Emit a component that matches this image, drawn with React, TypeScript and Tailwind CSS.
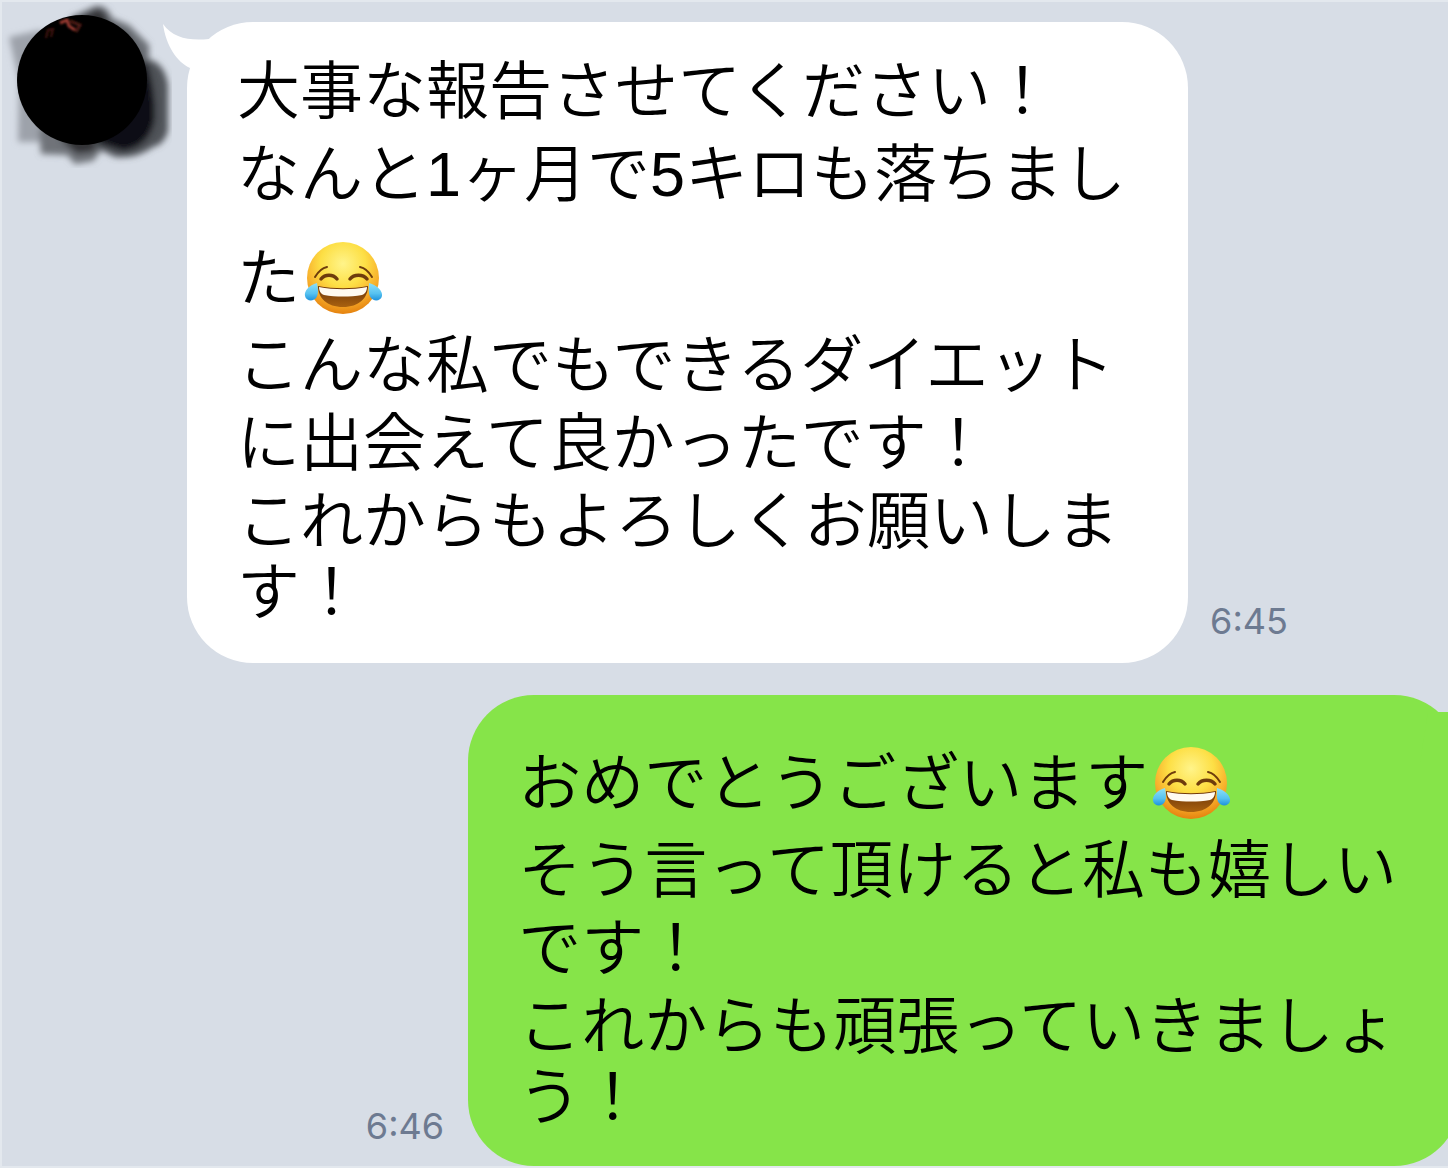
import React from 'react';
import clsx from 'clsx';

interface ChatLine {
  text: string;
  emoji?: boolean;
  className: string;
}

interface ChatMessage {
  id: string;
  sender: 'friend' | 'me';
  time: string;
  lines: ChatLine[];
}

const messages: ChatMessage[] = [
  {
    id: 'm1',
    sender: 'friend',
    time: '6:45',
    lines: [
      { text: '大事な報告させてください！', className: 'leading-[78px]' },
      { text: 'なんと1ヶ月で5キロも落ちまし', className: 'leading-[88px]' },
      { text: 'た', emoji: true, className: 'pt-3 leading-[96px]' },
      { text: 'こんな私でもできるダイエット', className: 'leading-[78px]' },
      { text: 'に出会えて良かったです！', className: 'leading-[78px]' },
      { text: 'これからもよろしくお願いしま', className: 'leading-[78px]' },
      { text: 'す！', className: 'leading-[64px]' },
    ],
  },
  {
    id: 'm2',
    sender: 'me',
    time: '6:46',
    lines: [
      { text: 'おめでとうございます', emoji: true, className: 'leading-[96px]' },
      { text: 'そう言って頂けると私も嬉しい', className: 'leading-[78px]' },
      { text: 'です！', className: 'leading-[78px]' },
      { text: 'これからも頑張っていきましょ', className: 'leading-[78px]' },
      { text: 'う！', className: 'leading-[64px]' },
    ],
  },
];

const JoyEmoji: React.FC<{ id: string }> = ({ id }) => (
  <svg viewBox="0 0 80 76" className="ml-1 w-20 h-[76px]" role="img" aria-label="😂">
    <defs>
      <radialGradient id={`${id}-face`} cx="0.5" cy="0.3" r="0.7">
        <stop offset="0" stopColor="#fff48a" />
        <stop offset="0.45" stopColor="#fddf45" />
        <stop offset="0.75" stopColor="#f8b02c" />
        <stop offset="1" stopColor="#e5820f" />
      </radialGradient>
      <linearGradient id={`${id}-mouth`} x1="0" y1="0" x2="0" y2="1">
        <stop offset="0" stopColor="#6b3408" />
        <stop offset="1" stopColor="#a9610f" />
      </linearGradient>
      <linearGradient id={`${id}-tear`} x1="0" y1="0" x2="0" y2="1">
        <stop offset="0" stopColor="#8fe0f8" />
        <stop offset="0.6" stopColor="#56c2f0" />
        <stop offset="1" stopColor="#1d92dc" />
      </linearGradient>
    </defs>
    <circle cx="39" cy="38" r="36" fill={`url(#${id}-face)`} />
    <g fill="none" stroke="#6e3c0c" strokeLinecap="round">
      <path d="M11 37 C14 32 18 28 23 27" strokeWidth="2" />
      <path d="M56 27 C61 28 65 32 68 37" strokeWidth="2" />
      <path d="M17 39 C21 34 29 34 33 39" strokeWidth="3.5" />
      <path d="M46 39 C50 34 59 34 63 39" strokeWidth="3.5" />
    </g>
    <path d="M14 46 C30 49 48 49 64 46 C64 58 55 67 39 67 C23 67 14 58 14 46 Z" fill={`url(#${id}-mouth)`} />
    <path d="M15 47 C30 50 48 50 63 47 C63 51 61 54 58 55 C46 57 32 57 20 55 C17 54 15 51 15 47 Z" fill="#fffaf0" />
    <path d="M13 43 C5 45 0 51 1 56 C2 61 9 62 12 58 C15 54 14 49 13 43 Z" fill={`url(#${id}-tear)`} />
    <path d="M65 43 C73 45 79 51 78 56 C77 61 70 62 67 58 C64 54 65 49 65 43 Z" fill={`url(#${id}-tear)`} />
  </svg>
);

// Profile picture scribbled over with a soft black brush
const HiddenAvatar: React.FC = () => (
  <svg viewBox="0 0 170 166" className="w-[170px] h-[166px]" role="img" aria-label="Avatar">
    <defs>
      <filter id="brush" x="-10%" y="-10%" width="120%" height="120%">
        <feGaussianBlur stdDeviation="3" />
      </filter>
      <filter id="photo">
        <feGaussianBlur stdDeviation="1" />
      </filter>
    </defs>
    <g filter="url(#brush)" transform="translate(-1 -1)">
      <path d="M8 36 L40 29 L70 60 L50 130 L38 141 L17 141 L18 80 Z" fill="#9da2aa" />
      <path d="M70 16 L94 5 Q106 3 111 17 L128 24 L148 44 L148 110 L60 60 Z" fill="#6a6e74" />
      <path d="M76 18 L96 8 Q103 7 108 22 L126 34 L142 60 L100 80 Z" fill="#303236" />
      <path d="M38 128 L60 120 L108 140 L92 160 L74 163 L66 154 L40 153 Z" fill="#6f7379" />
      <path d="M58 138 L104 138 L92 151 L76 153 Z" fill="#303236" />
      <path d="M110 60 L150 59 Q164 64 167 84 L167 130 Q163 144 152 146 Q136 158 114 156 L92 145 Z" fill="#505358" />
      <path d="M100 70 L146 62 Q155 90 154 118 Q149 146 122 150 L96 142 Z" fill="#101112" />
    </g>
    <circle cx="80" cy="78" r="65" fill="#000" />
    <g filter="url(#photo)" fill="none">
      <path d="M44 36 L46 28 L51 27 L49 35" stroke="#451810" strokeWidth="2" />
      <path d="M58 21 L65 18 L67 24 L73 28" stroke="#9a3a30" strokeWidth="3" />
      <path d="M68 19 L78 23 L74 30" stroke="#4d1a14" strokeWidth="3" />
    </g>
  </svg>
);

const Bubble: React.FC<{ message: ChatMessage }> = ({ message }) => {
  const mine = message.sender === 'me';

  return (
    <div
      className={clsx(
        'relative shrink-0 rounded-[66px] text-black text-[63px] font-[350] whitespace-nowrap',
        mine ? '-mr-3 pt-10 pb-[37px] pl-[50px] pr-[63px] bg-[#86e449]' : 'pt-[30px] pb-[39px] pl-[50px] pr-[62px] bg-white'
      )}
    >
      {mine ? (
        <svg viewBox="0 0 40 50" className="absolute right-0 top-[17px] w-10 h-[50px]" aria-hidden="true">
          <path d="M8 0 L26 0 L40 0 L40 50 L0 50 Z" fill="#86e449" />
        </svg>
      ) : (
        <svg viewBox="0 0 64 50" className="absolute -left-6 top-0 w-16 h-[50px]" aria-hidden="true">
          <path d="M0 2 C10 16 26 19 46 17 L60 40 L27 46 C14 40 3 24 0 2 Z" fill="#fff" />
        </svg>
      )}
      {message.lines.map((line) => (
        <p key={line.text} className={clsx('relative flex items-center', line.className)}>
          {line.text}
          {line.emoji && <JoyEmoji id={message.id} />}
        </p>
      ))}
    </div>
  );
};

const App: React.FC = () => {
  return (
    <main
      lang="ja"
      className="min-h-screen overflow-hidden border-2 border-r-0 border-[#e3e8ee] bg-[#d7dde6] font-['Liberation_Sans','Noto_Sans_CJK_JP',sans-serif]"
    >
      {messages.map((message) => {
        const mine = message.sender === 'me';
        return (
          <div key={message.id} className={clsx('flex items-end', mine ? 'justify-end gap-6 mt-8' : 'pt-5')}>
            {!mine && (
              <div className="w-[185px] shrink-0 self-start -mt-5">
                <HiddenAvatar />
              </div>
            )}
            {!mine && <Bubble message={message} />}
            <time className={clsx("font-['Inter',sans-serif] text-4xl leading-10 text-[#6d7a91]", mine ? 'mb-5' : 'ml-[22px] mb-[22px]')}>
              {message.time}
            </time>
            {mine && <Bubble message={message} />}
          </div>
        );
      })}
    </main>
  );
};

export default App;
